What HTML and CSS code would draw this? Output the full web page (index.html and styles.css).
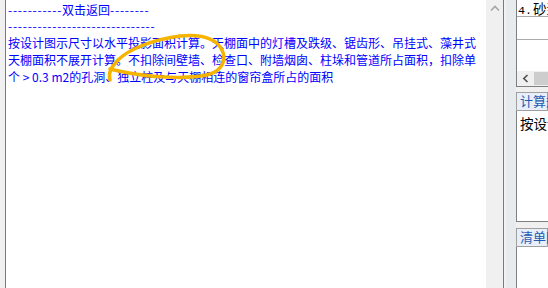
FILE: index.html
```html
<!DOCTYPE html>
<html>
<head>
<meta charset="utf-8">
<link rel="stylesheet" href="styles.css">
</head>
<body>
<div class="window">
  <div class="edge"></div>
  <div class="textbox">
    <div class="text">
      <div class="line"><span class="dash">-----------</span>双击返回<span class="dash">--------</span></div>
      <div class="line"><span class="dash">------------------------------</span></div>
      <div class="para">按设计图示尺寸以水平投影面积计算。天棚面中的灯槽及跌级、锯齿形、吊挂式、藻井式天棚面积不展开计算。不扣除间壁墙、检查口、附墙烟囱、柱垛和管道所占面积，扣除单个 &gt; 0.3 m2的孔洞、独立柱及与天棚相连的窗帘盒所占的面积</div>
    </div>
    <div class="vscroll">
      <svg class="uparrow" width="10" height="7" viewBox="0 0 10 7"><polyline points="1,5.5 5,1.5 9,5.5" fill="none" stroke="#a6a6a6" stroke-width="1.6"/></svg>
    </div>
  </div>
  <div class="gap"></div>
  <div class="right">
    <div class="list">
      <div class="row first"><span class="num">4.</span><span class="cjk">砂浆</span></div>
      <div class="row second"></div>
      <div class="list-fill"></div>
      <div class="hscroll">
        <div class="hbtn"><svg width="7" height="9" viewBox="0 0 7 9"><polyline points="5.5,1 1.8,4.5 5.5,8" fill="none" stroke="#505050" stroke-width="1.6"/></svg></div>
        <div class="hthumb"></div>
      </div>
    </div>
    <div class="group g1">
      <div class="hdr">计算规则</div>
      <div class="content">按设计图示</div>
    </div>
    <div class="group g2">
      <div class="hdr">清单附注</div>
      <div class="content"></div>
    </div>
  </div>
  <svg class="annot" width="548" height="288" viewBox="0 0 548 288">
    <path d="M 110 80 C 108 74, 110 68, 118 60 C 128 50, 150 40, 180 36 C 200 34, 216 38, 222 50 C 227 60, 222 70, 210 74 C 195 79, 160 78, 135 74 C 122 72, 114 70, 110 69" fill="none" stroke="#f5b400" stroke-width="3.5" stroke-linecap="round" stroke-linejoin="round"/>
  </svg>
</div>
</body>
</html>
```
FILE: styles.css
```css
* { box-sizing: border-box; }
html, body {
  margin: 0;
  padding: 0;
  width: 548px;
  height: 288px;
  overflow: hidden;
  background: #f0f0f0;
  font-family: "Noto Sans CJK SC", sans-serif;
}
.window {
  position: relative;
  display: flex;
  width: 548px;
  height: 288px;
}
.edge {
  width: 5px;
  background: #f0f0f0;
}
.textbox {
  width: 499px;
  display: flex;
  background: #fff;
  border-left: 1px solid #7a7a7a;
  border-right: 1px solid #7a7a7a;
}
.text {
  width: 480px;
  padding: 1.5px 0 0 2px;
  color: #0000ff;
  font-size: 12px;
  line-height: 16.75px;
}
.line { white-space: nowrap; }
.dash { letter-spacing: 0.75px; }
.vscroll {
  width: 17px;
  background: #f0f0f0;
  display: flex;
  justify-content: center;
  padding-top: 5px;
}
.uparrow { display: block; }
.gap {
  width: 12px;
  background: #e8ebed;
  border-left: 2px solid #f2f2f2;
}
.right {
  width: 32px;
  display: flex;
  flex-direction: column;
  overflow: hidden;
}
.list {
  height: 87px;
  display: flex;
  flex-direction: column;
  background: #fff;
  border-left: 1px solid #808080;
  border-bottom: 1px solid #808080;
}
.row {
  border-bottom: 1px solid #a9a9a9;
  white-space: nowrap;
  color: #000;
  padding-left: 1px;
}
.num {
  font-family: "Liberation Mono", monospace;
  font-size: 11.7px;
  display: inline-block;
  width: 15px;
}
.cjk {
  font-family: "Noto Sans CJK SC", sans-serif;
  font-size: 13.5px;
}
.row.first { height: 17px; line-height: 15px; }
.row.second { height: 23px; }
.list-fill { flex: 1; }
.hscroll {
  height: 15px;
  display: flex;
  background: #f0f0f0;
}
.hbtn {
  width: 17px;
  display: flex;
  align-items: center;
  justify-content: center;
}
.hbtn svg { display: block; }
.hthumb {
  flex: 1;
  background: #cdcdcd;
  margin: 1px 0;
}
.group {
  display: flex;
  flex-direction: column;
  margin-top: 5px;
}
.g1 { height: 130px; }
.g2 { flex: 1; margin-top: 6px; }
.hdr {
  height: 19px;
  border: 1px solid #a0a0a0;
  background: #e8eff8;
  color: #1f5bb5;
  font-size: 13px;
  line-height: 16px;
  padding-left: 3px;
  white-space: nowrap;
}
.content {
  flex: 1;
  background: #fff;
  border-left: 1px solid #808080;
  border-bottom: 1px solid #808080;
  font-size: 13.5px;
  line-height: 18px;
  padding: 3px 0 0 3px;
  color: #000;
  white-space: nowrap;
}
.g2 .content { border-bottom: none; }
.annot {
  position: absolute;
  left: 0;
  top: 0;
  pointer-events: none;
}
```
